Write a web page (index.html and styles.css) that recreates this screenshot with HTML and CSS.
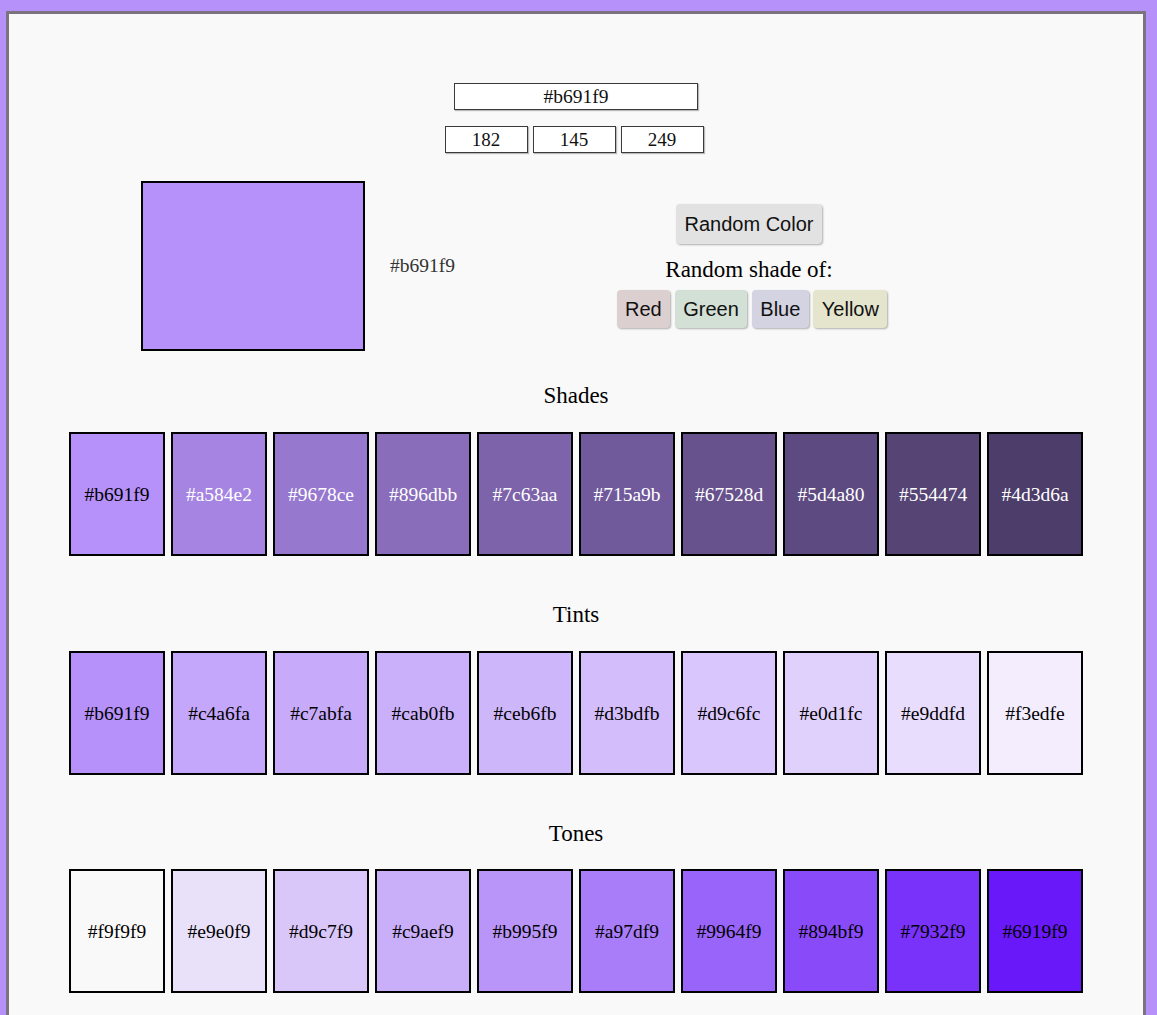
FILE: index.html
```html
<!DOCTYPE html>
<html>
	<head>
		<meta charset="UTF-8">
		<title>Color shades</title>
		<link rel="stylesheet" href="styles.css">
	</head>
	<body>
		<div class="page">
			<div class="hex-row">
				<input class="hex-input" type="text" value="#b691f9">
			</div>
			<div class="rgb-row">
				<input class="rgb-input" type="text" value="182">
				<input class="rgb-input" type="text" value="145">
				<input class="rgb-input" type="text" value="249">
			</div>

			<div class="main">
				<div class="preview">
					<div class="preview-box"></div>
					<span class="preview-label">#b691f9</span>
				</div>
				<div class="controls">
					<button class="btn btn-random">Random Color</button>
					<p class="controls-title">Random shade of:</p>
					<div class="shade-btns">
						<button class="btn btn-red">Red</button>
						<button class="btn btn-green">Green</button>
						<button class="btn btn-blue">Blue</button>
						<button class="btn btn-yellow">Yellow</button>
					</div>
				</div>
			</div>

			<!-- shades -->
			<h2 class="section-title first">Shades</h2>
			<ul class="swatches">
				<li class="swatch" style="background:#b691f9">#b691f9</li>
				<li class="swatch light" style="background:#a584e2">#a584e2</li>
				<li class="swatch light" style="background:#9678ce">#9678ce</li>
				<li class="swatch light" style="background:#896dbb">#896dbb</li>
				<li class="swatch light" style="background:#7c63aa">#7c63aa</li>
				<li class="swatch light" style="background:#715a9b">#715a9b</li>
				<li class="swatch light" style="background:#67528d">#67528d</li>
				<li class="swatch light" style="background:#5d4a80">#5d4a80</li>
				<li class="swatch light" style="background:#554474">#554474</li>
				<li class="swatch light" style="background:#4d3d6a">#4d3d6a</li>
			</ul>

			<!-- tints -->
			<h2 class="section-title">Tints</h2>
			<ul class="swatches">
				<li class="swatch" style="background:#b691f9">#b691f9</li>
				<li class="swatch" style="background:#c4a6fa">#c4a6fa</li>
				<li class="swatch" style="background:#c7abfa">#c7abfa</li>
				<li class="swatch" style="background:#cab0fb">#cab0fb</li>
				<li class="swatch" style="background:#ceb6fb">#ceb6fb</li>
				<li class="swatch" style="background:#d3bdfb">#d3bdfb</li>
				<li class="swatch" style="background:#d9c6fc">#d9c6fc</li>
				<li class="swatch" style="background:#e0d1fc">#e0d1fc</li>
				<li class="swatch" style="background:#e9ddfd">#e9ddfd</li>
				<li class="swatch" style="background:#f3edfe">#f3edfe</li>
			</ul>

			<!-- tones -->
			<h2 class="section-title last">Tones</h2>
			<ul class="swatches">
				<li class="swatch" style="background:#f9f9f9">#f9f9f9</li>
				<li class="swatch" style="background:#e9e0f9">#e9e0f9</li>
				<li class="swatch" style="background:#d9c7f9">#d9c7f9</li>
				<li class="swatch" style="background:#c9aef9">#c9aef9</li>
				<li class="swatch" style="background:#b995f9">#b995f9</li>
				<li class="swatch" style="background:#a97df9">#a97df9</li>
				<li class="swatch" style="background:#9964f9">#9964f9</li>
				<li class="swatch" style="background:#894bf9">#894bf9</li>
				<li class="swatch" style="background:#7932f9">#7932f9</li>
				<li class="swatch" style="background:#6919f9">#6919f9</li>
			</ul>
		</div>
	</body>
</html>
```

FILE: styles.css
```css
* { margin:0; padding:0; box-sizing:border-box; }
ul, li { list-style:none; }

body { background:#b691f9; padding:11px 0 0 6px; font-family:"Liberation Serif", "Times New Roman", serif; color:#000; }

.page { width:1140px; min-height:1100px; border:3px solid #7b7480; background:#f9f9f9; padding-top:69px; }

/* inputs */
.hex-row { display:flex; justify-content:center; }
.hex-input { width:244px; height:27px; border:1px solid #3a3a3a; box-shadow:1px 1px 1px rgba(0,0,0,.25); background:#fff; text-align:center; font-family:"Liberation Serif", serif; font-size:19.5px; color:#111; }
.rgb-row { display:flex; justify-content:center; gap:5px; margin-top:16px; padding-right:4px; }
.rgb-input { width:83px; height:27px; border:1px solid #3a3a3a; box-shadow:1px 1px 1px rgba(0,0,0,.25); background:#fff; text-align:center; font-family:"Liberation Serif", serif; font-size:19px; color:#111; }

/* preview + controls */
.main { display:flex; align-items:flex-start; padding-left:132px; margin-top:28px; }
.preview { display:flex; align-items:center; gap:25px; }
.preview-box { width:224px; height:170px; border:2px solid #000; background:#b691f9; }
.preview-label { font-size:19.5px; color:#333; }

.controls { width:280px; margin-left:154px; margin-top:23px; display:flex; flex-direction:column; align-items:center; }
.controls-title { font-size:23px; line-height:26px; margin-top:13px; }
.shade-btns { display:flex; gap:4.5px; margin-top:7px; margin-left:6px; }

.btn { font-family:"Liberation Sans", Arial, sans-serif; font-size:20px; color:#111; border:none; border-radius:4px; padding:0 8.5px; height:38px; box-shadow:1px 1px 2px rgba(0,0,0,.3); cursor:pointer; }
.btn-random { background:#e2e2e2; height:40px; padding:0 9px; }
.btn-red { background:#dccfd0; }
.btn-green { background:#d2e0d5; }
.btn-blue { background:#d3d3e2; }
.btn-yellow { background:#e5e5cd; }

/* swatch rows */
.section-title { font-size:23px; line-height:26px; font-weight:normal; text-align:center; margin:46px 0 23px; }
.section-title.first { margin-top:32px; }
.section-title.last { margin-bottom:22px; }
.swatches { display:flex; justify-content:center; gap:6px; }
.swatch { width:96px; height:124px; border:2px solid #000; display:flex; align-items:center; justify-content:center; padding-top:2px; font-size:19.5px; color:#000; }
.swatch.light { color:#fff; }
```
